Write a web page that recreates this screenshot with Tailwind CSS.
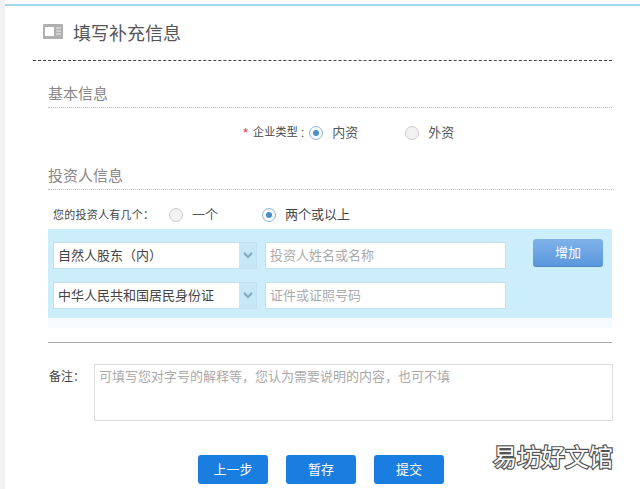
<!DOCTYPE html>
<html lang="zh">
<head>
<meta charset="utf-8">
<script src="https://cdn.jsdelivr.net/npm/@tailwindcss/browser@4"></script>
</head>
<body class="bg-white">
<div class="relative w-[640px] h-[489px] overflow-hidden bg-white text-[#444] font-['Liberation_Sans','Noto_Sans_CJK_SC',sans-serif]">
  <div class="ml-[5px] h-[489px] pt-[4px] flex flex-col">
    <div class="h-[2px] bg-[#a5d8ee] shrink-0"></div>
    <div class="flex items-center h-[54px] ml-[38px] shrink-0">
      <svg class="w-[20px] h-[15px] -mt-[4px]" viewBox="0 0 20 15"><rect width="20" height="15" rx="1" fill="#b0b0b0"/><rect x="2" y="3" width="9" height="9" fill="#fff"/><path d="M13 4h5M13 7h5M13 10h5" stroke="#eee" stroke-width="1.2"/></svg>
      <span class="ml-[10px] mt-[2px] text-[18px] leading-[26px] text-[#555]">填写补充信息</span>
    </div>
    <div class="ml-[28px] w-[579px] border-t border-dashed border-[#444] shrink-0"></div>
    <div class="ml-[43px] w-[564px] h-[47px] border-b border-dotted border-[#bbb] flex items-end pb-[2px] text-[15px] leading-[22px] text-[#888] shrink-0">基本信息</div>
    <div class="ml-[43px] w-[564px] h-[49px] flex items-center shrink-0">
      <span class="ml-[195px] text-[13px] text-[#d33]">*</span>
      <span class="ml-[5px] text-[11px] tracking-[0.2px]">企业类型</span>
      <span class="ml-[3px] text-[12px]">:</span>
      <span class="ml-[5px] w-[14px] h-[14px] rounded-full border border-[#8fb8d4] bg-[#f4f9fc] flex items-center justify-center"><span class="w-[6px] h-[6px] rounded-full bg-[#4d8fc4]"></span></span>
      <span class="ml-[9px] text-[13px] text-[#555]">内资</span>
      <span class="ml-[47px] w-[14px] h-[14px] rounded-full border border-[#ccc] bg-[#f2f2f2]"></span>
      <span class="ml-[9px] text-[13px] text-[#555]">外资</span>
    </div>
    <div class="ml-[43px] w-[564px] h-[33px] border-b border-dotted border-[#bbb] flex items-end pb-[2px] text-[15px] leading-[22px] text-[#888] shrink-0">投资人信息</div>
    <div class="ml-[48px] h-[39px] pt-[11px] flex items-center shrink-0">
      <span class="w-[116px] text-[11px] tracking-[0.25px] text-[#444]">您的投资人有几个：</span>
      <span class="w-[14px] h-[14px] rounded-full border border-[#ccc] bg-[#f2f2f2]"></span>
      <span class="ml-[9px] text-[13px] text-[#555]">一个</span>
      <span class="ml-[44px] w-[14px] h-[14px] rounded-full border border-[#8fb8d4] bg-[#f4f9fc] flex items-center justify-center"><span class="w-[6px] h-[6px] rounded-full bg-[#4d8fc4]"></span></span>
      <span class="ml-[9px] text-[13px] text-[#444]">两个或以上</span>
    </div>
    <div class="ml-[43px] w-[564px] h-[89px] bg-[#ccedfa] pt-[13px] pl-[5px] flex shrink-0">
      <div class="flex flex-col gap-[13px]">
        <div class="flex gap-[8px]">
          <div class="w-[204px] h-[27px] flex border border-[#c3e0ec]">
            <span class="w-[185px] bg-white pl-[4px] text-[13px] leading-[25px] text-[#444]">自然人股东（内）</span>
            <span class="flex-1 flex items-center justify-center bg-[#c6e8f6]"><svg class="w-[10px] h-[7px]" viewBox="0 0 10 7"><path d="M1 1l4 4 4-4" fill="none" stroke="#7fa8bf" stroke-width="2"/></svg></span>
          </div>
          <div class="w-[241px] h-[27px] bg-white border border-[#c3e0ec] pl-[4px] text-[13px] leading-[25px] text-[#aaa]">投资人姓名或名称</div>
        </div>
        <div class="flex gap-[8px]">
          <div class="w-[204px] h-[27px] flex border border-[#c3e0ec]">
            <span class="w-[185px] bg-white pl-[4px] text-[13px] leading-[25px] text-[#444]">中华人民共和国居民身份证</span>
            <span class="flex-1 flex items-center justify-center bg-[#c6e8f6]"><svg class="w-[10px] h-[7px]" viewBox="0 0 10 7"><path d="M1 1l4 4 4-4" fill="none" stroke="#7fa8bf" stroke-width="2"/></svg></span>
          </div>
          <div class="w-[241px] h-[27px] bg-white border border-[#c3e0ec] pl-[4px] text-[13px] leading-[25px] text-[#aaa]">证件或证照号码</div>
        </div>
      </div>
      <div class="ml-[27px] -mt-[3px] w-[70px] h-[28px] rounded-[3px] bg-gradient-to-b from-[#7fb2e8] to-[#5a97dd] border-b border-[#4f87c4] text-center text-[13px] leading-[27px] text-white">增加</div>
    </div>
    <div class="ml-[43px] w-[564px] h-[10px] bg-[#f5fbfe] shrink-0"></div>
    <div class="ml-[43px] w-[564px] mt-[14px] border-t border-[#aaa] shrink-0"></div>
    <div class="ml-[44px] mt-[21px] flex shrink-0">
      <span class="w-[45px] pt-[5px] text-[12px] leading-[16px] text-[#444]">备注：</span>
      <div class="w-[519px] h-[57px] border border-[#ddd] pl-[4px] pt-[2px] text-[13px] leading-[20px] text-[#aaa]">可填写您对字号的解释等，您认为需要说明的内容，也可不填</div>
    </div>
    <div class="ml-[193px] mt-[34px] flex gap-[18px] shrink-0">
      <div class="w-[70px] h-[29px] rounded-[3px] bg-[#1a7de0] text-center text-[13px] leading-[29px] text-white">上一步</div>
      <div class="w-[70px] h-[29px] rounded-[3px] bg-[#1a7de0] text-center text-[13px] leading-[29px] text-white">暂存</div>
      <div class="w-[70px] h-[29px] rounded-[3px] bg-[#1a7de0] text-center text-[13px] leading-[29px] text-white">提交</div>
    </div>
  </div>
  <div class="absolute left-0 top-0 w-[5px] h-[489px] bg-[#f1f1f1]"></div>
  <div class="absolute left-[493px] top-[444px] text-[24px] leading-[28px] text-white [paint-order:stroke] [-webkit-text-stroke:2.4px_#555]">易坊好文馆</div>
</div>
</body>
</html>
